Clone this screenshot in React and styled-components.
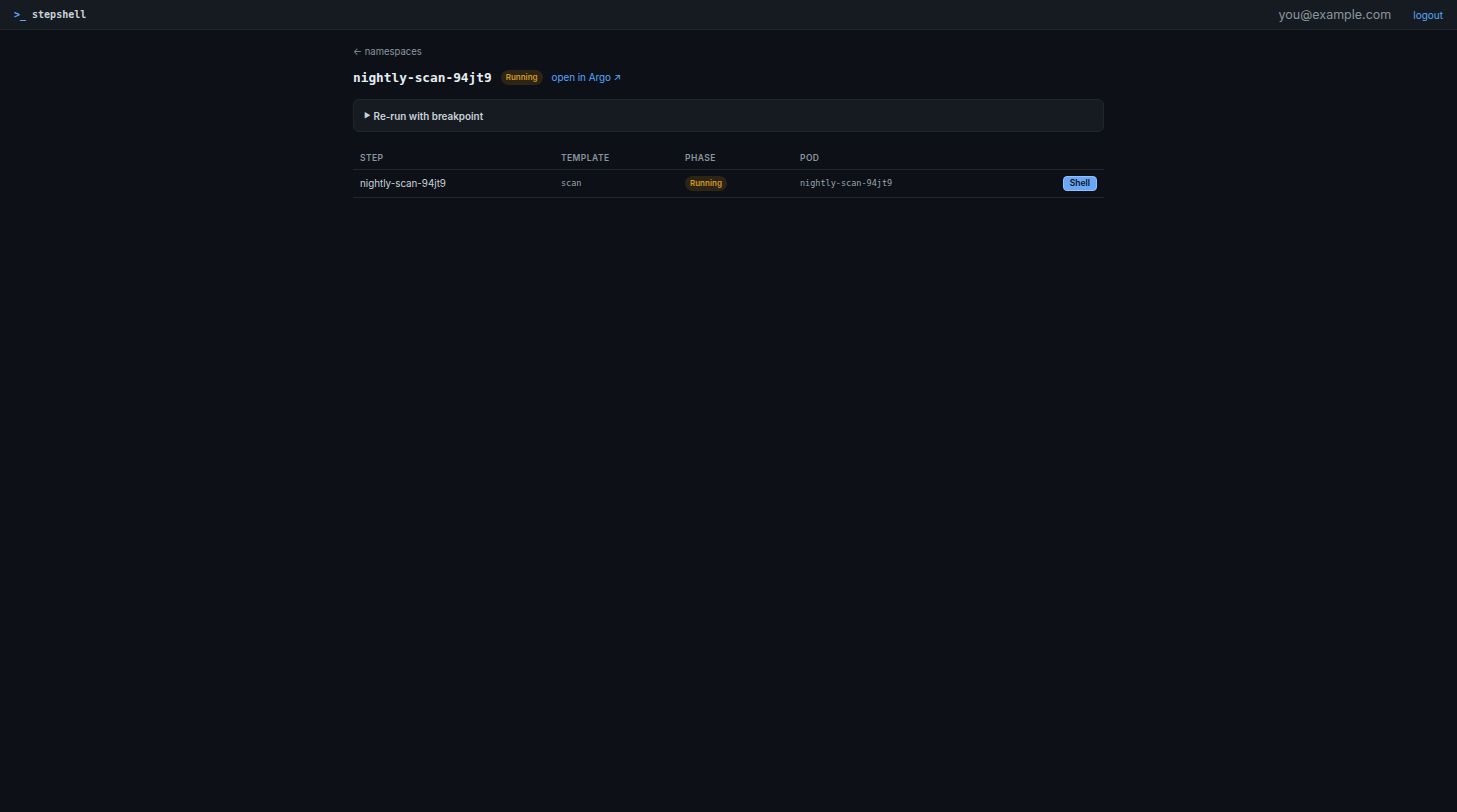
import styled, { createGlobalStyle } from "styled-components";

const GlobalStyle = createGlobalStyle`
  html, body {
    margin: 0;
    padding: 0;
    background: #0d1117;
    color: #c9d1d9;
    font-family: Inter, "Liberation Sans", Arial, sans-serif;
    min-height: 100%;
  }
  * {
    box-sizing: border-box;
  }
`;

const Page = styled.div`
  min-height: 100vh;
  background: #0d1117;
`;

const TopBar = styled.header`
  height: 30px;
  display: flex;
  align-items: center;
  justify-content: space-between;
  padding: 0 14px;
  background: #161b22;
  border-bottom: 1px solid #21262d;
`;

const Brand = styled.div`
  font-family: "DejaVu Sans Mono", "Liberation Mono", monospace;
  font-size: 10px;
  font-weight: 700;
  color: #c9d1d9;
  display: flex;
  gap: 6px;
`;

const Prompt = styled.span`
  color: #58a6ff;
`;

const UserArea = styled.div`
  display: flex;
  align-items: center;
  gap: 22px;
`;

const Email = styled.span`
  font-size: 12.5px;
  color: #8b949e;
`;

const Logout = styled.a`
  font-size: 10px;
  color: #58a6ff;
  text-decoration: none;
  cursor: pointer;
`;

const Main = styled.main`
  width: 751px;
  margin: 0 auto;
  padding-top: 15px;
`;

const BackLink = styled.a`
  display: block;
  font-size: 9.5px;
  line-height: 14px;
  color: #8b949e;
  text-decoration: none;
`;

const TitleRow = styled.div`
  display: flex;
  align-items: center;
  gap: 9px;
  margin-top: 6px;
  height: 24px;
`;

const Title = styled.h1`
  margin: 0;
  font-family: "DejaVu Sans Mono", "Liberation Mono", monospace;
  font-size: 12.8px;
  font-weight: 700;
  color: #e6edf3;
`;

const Badge = styled.span`
  display: inline-flex;
  align-items: center;
  height: 15px;
  padding: 0 5px;
  border-radius: 8px;
  font-size: 8px;
  font-weight: 600;
  color: #d29922;
  background: rgba(187, 128, 9, 0.18);
`;

const ExternalLink = styled.a`
  font-size: 9.8px;
  color: #58a6ff;
  text-decoration: none;
`;

const Panel = styled.details`
  margin-top: 10px;
  background: #161b22;
  border: 1px solid #21262d;
  border-radius: 6px;
  padding: 0 10px;
`;

const PanelSummary = styled.summary`
  height: 31px;
  display: flex;
  align-items: center;
  gap: 3px;
  list-style: none;
  cursor: pointer;
  font-size: 9.9px;
  font-weight: 600;
  color: #c9d1d9;
  &::-webkit-details-marker {
    display: none;
  }
`;

const Caret = styled.span`
  font-size: 7px;
`;

const Table = styled.table`
  width: 100%;
  margin-top: 15px;
  border-collapse: collapse;
`;

const HeadCell = styled.th`
  text-align: left;
  font-size: 8.5px;
  font-weight: 600;
  letter-spacing: 0.05em;
  text-transform: uppercase;
  color: #8b949e;
  padding: 0 7px;
  height: 22px;
  border-bottom: 1px solid #21262d;
  width: ${(p) => p.$width || "auto"};
`;

const Cell = styled.td`
  font-size: 9.8px;
  color: #c9d1d9;
  padding: 0 7px;
  height: 28px;
  border-bottom: 1px solid #21262d;
  text-align: ${(p) => (p.$right ? "right" : "left")};
  font-family: ${(p) =>
    p.$mono
      ? `"DejaVu Sans Mono", "Liberation Mono", monospace`
      : `Inter, "Liberation Sans", Arial, sans-serif`};
  ${(p) => p.$mono && "font-size: 8.5px; color: #9aa3ad;"}
`;

const ShellButton = styled.button`
  height: 15px;
  padding: 0 6px;
  border: 1px solid #8ec1ff;
  border-radius: 4px;
  background: #6aa8f7;
  color: #0d1117;
  font-family: Inter, "Liberation Sans", Arial, sans-serif;
  font-size: 8.5px;
  font-weight: 600;
  cursor: pointer;
`;

const steps = [
  {
    name: "nightly-scan-94jt9",
    template: "scan",
    phase: "Running",
    pod: "nightly-scan-94jt9",
  },
];

export default function App() {
  return (
    <Page>
      <GlobalStyle />
      <TopBar>
        <Brand>
          <Prompt>&gt;_</Prompt>
          <span>stepshell</span>
        </Brand>
        <UserArea>
          <Email>you@example.com</Email>
          <Logout>logout</Logout>
        </UserArea>
      </TopBar>
      <Main>
        <BackLink>← namespaces</BackLink>
        <TitleRow>
          <Title>nightly-scan-94jt9</Title>
          <Badge>Running</Badge>
          <ExternalLink>open in Argo ↗</ExternalLink>
        </TitleRow>
        <Panel>
          <PanelSummary>
            <Caret>▶</Caret> Re-run with breakpoint
          </PanelSummary>
        </Panel>
        <Table>
          <thead>
            <tr>
              <HeadCell $width="201px">Step</HeadCell>
              <HeadCell $width="124px">Template</HeadCell>
              <HeadCell $width="115px">Phase</HeadCell>
              <HeadCell>Pod</HeadCell>
              <HeadCell />
            </tr>
          </thead>
          <tbody>
            {steps.map((s) => (
              <tr key={s.name}>
                <Cell>{s.name}</Cell>
                <Cell $mono>{s.template}</Cell>
                <Cell>
                  <Badge>{s.phase}</Badge>
                </Cell>
                <Cell $mono>{s.pod}</Cell>
                <Cell $right>
                  <ShellButton>Shell</ShellButton>
                </Cell>
              </tr>
            ))}
          </tbody>
        </Table>
      </Main>
    </Page>
  );
}
